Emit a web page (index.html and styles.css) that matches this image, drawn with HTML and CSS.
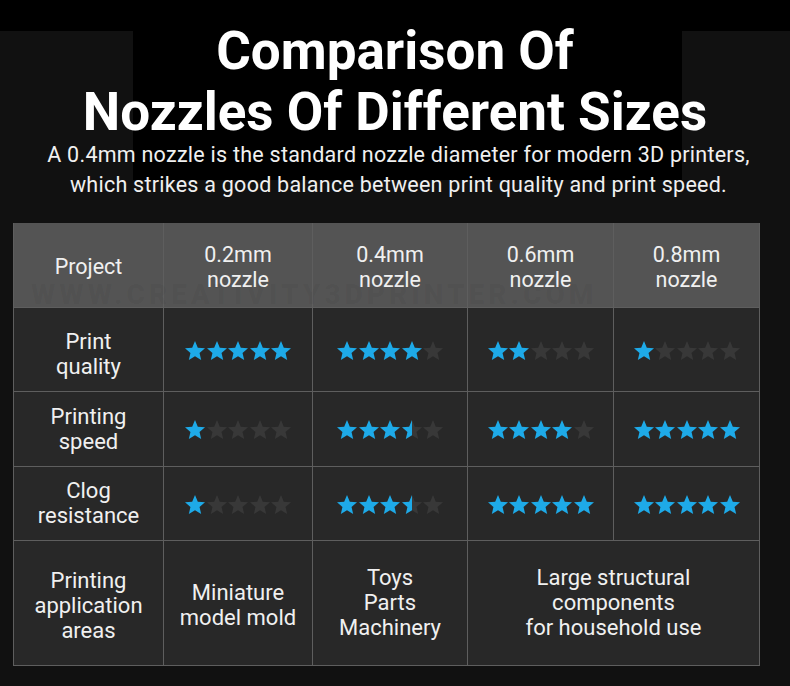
FILE: index.html
```html
<!DOCTYPE html>
<html lang="en">
<head>
<meta charset="utf-8">
<title>Comparison Of Nozzles Of Different Sizes</title>
<link rel="stylesheet" href="styles.css">
</head>
<body>
<svg class="defs" width="0" height="0" aria-hidden="true">
  <defs>
    <path id="star" d="M12 17.27L18.18 21l-1.64-7.03L22 9.24l-7.19-.61L12 2 9.19 8.63 2 9.24l5.46 4.73L5.82 21z"/>
  </defs>
</svg>
<header class="hero">
  <h1 class="title">Comparison Of<br>Nozzles Of Different Sizes</h1>
  <p class="lead">A 0.4mm nozzle is the standard nozzle diameter for modern 3D printers,<br>which strikes a good balance between print quality and print speed.</p>
</header>
<main class="wrap">
  <div class="table-box">
    <table class="cmp">
      <colgroup>
        <col class="c1"><col class="c2"><col class="c3"><col class="c4"><col class="c5">
      </colgroup>
      <thead>
        <tr class="head">
          <th>Project</th>
          <th>0.2mm<br>nozzle</th>
          <th>0.4mm<br>nozzle</th>
          <th>0.6mm<br>nozzle</th>
          <th>0.8mm<br>nozzle</th>
        </tr>
      </thead>
      <tbody>
        <tr class="r1">
          <td class="label">Print<br>quality</td>
          <td><span class="stars" data-v="5"></span></td>
          <td><span class="stars" data-v="4"></span></td>
          <td><span class="stars" data-v="2"></span></td>
          <td><span class="stars" data-v="1"></span></td>
        </tr>
        <tr class="r2">
          <td class="label">Printing<br>speed</td>
          <td><span class="stars" data-v="1"></span></td>
          <td><span class="stars" data-v="3.5"></span></td>
          <td><span class="stars" data-v="4"></span></td>
          <td><span class="stars" data-v="5"></span></td>
        </tr>
        <tr class="r3">
          <td class="label">Clog<br>resistance</td>
          <td><span class="stars" data-v="1"></span></td>
          <td><span class="stars" data-v="3.5"></span></td>
          <td><span class="stars" data-v="5"></span></td>
          <td><span class="stars" data-v="5"></span></td>
        </tr>
        <tr class="r4">
          <td class="label">Printing<br>application<br>areas</td>
          <td class="mini">Miniature<br>model mold</td>
          <td>Toys<br>Parts<br>Machinery</td>
          <td colspan="2">Large structural<br>components<br>for household use</td>
        </tr>
      </tbody>
    </table>
    <div class="watermark" aria-hidden="true">WWW.CREATIVITY3DPRINTER.COM</div>
  </div>
</main>
<script>
document.querySelectorAll('.stars').forEach(function (el) {
  var v = parseFloat(el.dataset.v);
  var html = '';
  for (var i = 1; i <= 5; i++) {
    var cls = v >= i ? 'on' : (v >= i - 0.5 ? 'half' : 'off');
    html += '<svg class="star ' + cls + '" viewBox="2 2 20 19.5" width="20" height="19.5">' +
      '<use class="bg" href="#star"/>' +
      (cls === 'half' ? '<use class="fg" href="#star"/>' : '') +
      '</svg>';
  }
  el.innerHTML = html;
});
</script>
</body>
</html>
```
FILE: styles.css
```css
* { box-sizing: border-box; }
html, body { margin: 0; padding: 0; }
body {
  width: 790px;
  min-height: 686px;
  background: #111111;
  font-family: Roboto, "Liberation Sans", Arial, sans-serif;
  color: #f2f2f2;
  overflow: hidden;
}
.defs { position: absolute; }

.hero {
  padding-top: 21px;
  text-align: center;
  background:
    linear-gradient(#000, #000) 0 0 / 100% 31px no-repeat,
    linear-gradient(#000, #000) 133px 0 / 549px 180px no-repeat,
    #111111;
}
.title {
  margin: 0;
  font-size: 53px;
  line-height: 61px;
  font-weight: 700;
  color: #ffffff;
}
.lead {
  margin: -3px 0 0;
  padding-left: 7px;
  font-size: 21.5px;
  letter-spacing: 0.25px;
  line-height: 30px;
  color: #f0f0f0;
}

.wrap {
  padding: 23px 0 0 13px;
}
.table-box {
  position: relative;
  width: 746px;
}
.cmp {
  width: 746px;
  table-layout: fixed;
  border-collapse: collapse;
  font-size: 22px;
  line-height: 25px;
  text-align: center;
}
.c1 { width: 150px; }
.c2 { width: 149px; }
.c3 { width: 155px; }
.c4 { width: 146px; }
.c5 { width: 146px; }

.cmp th, .cmp td {
  border: 1px solid #5e5e5e;
  padding: 0;
  vertical-align: middle;
  font-weight: 400;
  color: #f0f0f0;
}
.cmp thead th {
  background: #545454;
  border-top: 0;
  height: 84px;
  padding-top: 4px;
  font-size: 21.5px;
}
.cmp tbody td { background: #282828; }
.r1 td { height: 84px; }
.r1 .label { padding-top: 9px; }
.r2 td { height: 75px; }
.r3 td { height: 74px; }
.r4 td { height: 125px; }
.r4 .label { padding-top: 5px; }
.r4 .mini { padding-top: 4px; }

.stars {
  display: inline-flex;
  gap: 1.5px;
  vertical-align: middle;
}
.star { display: block; }
.star.on .bg { fill: #1eaae8; }
.star.off .bg, .star.half .bg { fill: #383838; }
.star.half .fg { fill: #1eaae8; clip-path: inset(0 50% 0 0); }

.watermark {
  position: absolute;
  left: 18px;
  top: 60px;
  font-size: 28px;
  line-height: 24px;
  font-weight: 900;
  letter-spacing: 4px;
  color: rgba(0, 0, 0, 0.04);
  white-space: nowrap;
  pointer-events: none;
}
```
